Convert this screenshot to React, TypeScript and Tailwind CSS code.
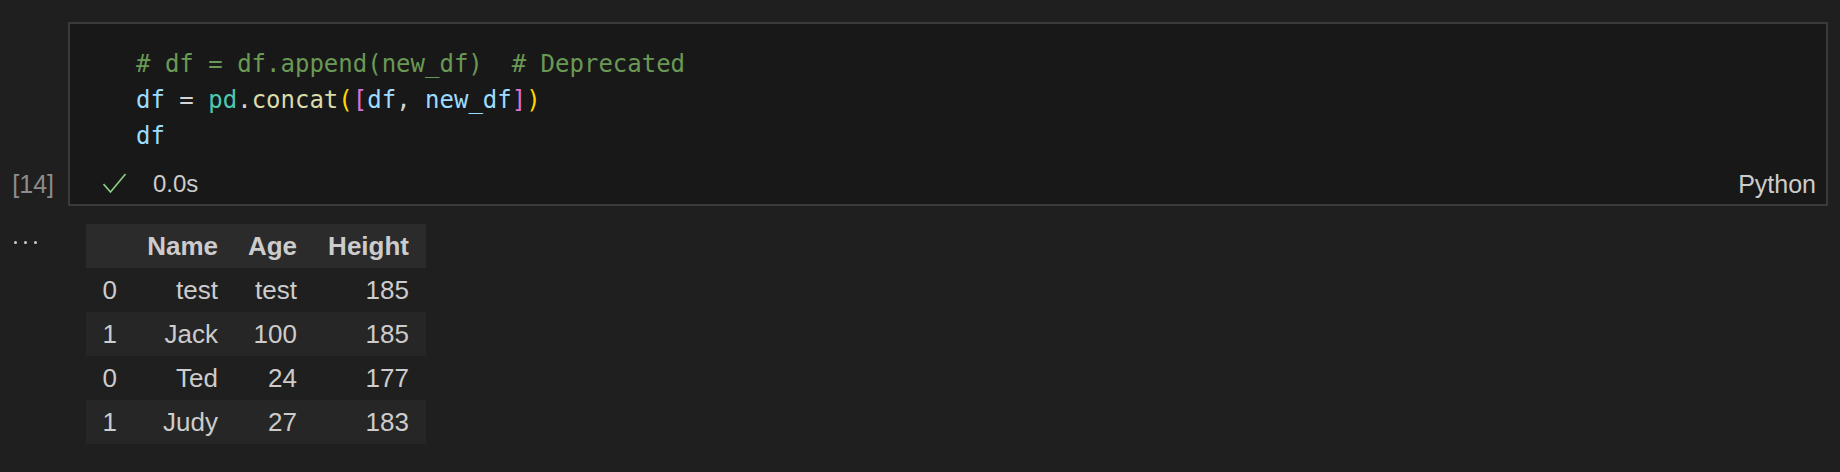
import React from "react";

const mono = { fontFamily: '"DejaVu Sans Mono", "Liberation Mono", monospace' };
const sans = { fontFamily: '"Liberation Sans", Arial, sans-serif' };

const rows = [
  ["0", "test", "test", "185"],
  ["1", "Jack", "100", "185"],
  ["0", "Ted", "24", "177"],
  ["1", "Judy", "27", "183"],
];

export default function App() {
  return (
    <div className="w-[1840px] h-[472px] bg-[#1f1f1f] pt-[22px] overflow-hidden" style={sans}>
      {/* Cell */}
      <div className="flex">
        <div className="w-[68px] flex flex-col justify-end pb-[7px] pr-[14px] items-end">
          <span className="text-[25px] leading-[30px] text-[#8c8c8c]">[14]</span>
        </div>
        <div className="w-[1760px] h-[184px] border-2 border-[#3a3a3d] bg-[#181818] flex flex-col">
          <div className="pl-[66px] pt-[22px] text-[24px] leading-[36px] whitespace-pre" style={mono}>
            <div className="text-[#6a9955]"># df = df.append(new_df)  # Deprecated</div>
            <div>
              <span className="text-[#9cdcfe]">df</span>
              <span className="text-[#d4d4d4]"> = </span>
              <span className="text-[#4ec9b0]">pd</span>
              <span className="text-[#d4d4d4]">.</span>
              <span className="text-[#dcdcaa]">concat</span>
              <span className="text-[#ffd700]">(</span>
              <span className="text-[#da70d6]">[</span>
              <span className="text-[#9cdcfe]">df</span>
              <span className="text-[#d4d4d4]">, </span>
              <span className="text-[#9cdcfe]">new_df</span>
              <span className="text-[#da70d6]">]</span>
              <span className="text-[#ffd700]">)</span>
            </div>
            <div className="text-[#9cdcfe]">df</div>
          </div>
          <div className="mt-[12px] h-[38px] flex items-start">
            <div className="w-[83px] pl-[33px] pt-[7px]">
              <svg width="24" height="22" viewBox="0 0 24 22" fill="none">
                <polyline points="0.5,11 7.5,19 22.5,1" stroke="#89d185" strokeWidth="1.6" fill="none" />
              </svg>
            </div>
            <span className="text-[24px] leading-[36px] text-[#cccccc]">0.0s</span>
            <span className="ml-auto pr-[10px] text-[25px] leading-[36px] text-[#cccccc]">Python</span>
          </div>
        </div>
      </div>
      {/* Output */}
      <div className="flex mt-[18px]">
        <div className="w-[86px] pl-[14px] pt-[17px]">
          <div className="flex gap-[7px]">
            <div className="w-[3px] h-[3px] rounded-full bg-[#cccccc]" />
            <div className="w-[3px] h-[3px] rounded-full bg-[#cccccc]" />
            <div className="w-[3px] h-[3px] rounded-full bg-[#cccccc]" />
          </div>
        </div>
        <table className="border-collapse text-[26px] text-[#cccccc]">
          <thead>
            <tr className="bg-[#2b2b2b] h-[44px]">
              <th className="w-[47px] p-0"></th>
              <th className="w-[101px] p-0 pr-[16px] text-right font-bold leading-[44px]">Name</th>
              <th className="w-[79px] p-0 pr-[16px] text-right font-bold leading-[44px]">Age</th>
              <th className="w-[113px] p-0 pr-[17px] text-right font-bold leading-[44px]">Height</th>
            </tr>
          </thead>
          <tbody>
            {rows.map((r, i) => (
              <tr key={i} className={i % 2 === 1 ? "bg-[#262626] h-[44px]" : "h-[44px]"}>
                <td className="p-0 pr-[16px] text-right leading-[44px]">{r[0]}</td>
                <td className="p-0 pr-[16px] text-right leading-[44px]">{r[1]}</td>
                <td className="p-0 pr-[16px] text-right leading-[44px]">{r[2]}</td>
                <td className="p-0 pr-[17px] text-right leading-[44px]">{r[3]}</td>
              </tr>
            ))}
          </tbody>
        </table>
      </div>
    </div>
  );
}
